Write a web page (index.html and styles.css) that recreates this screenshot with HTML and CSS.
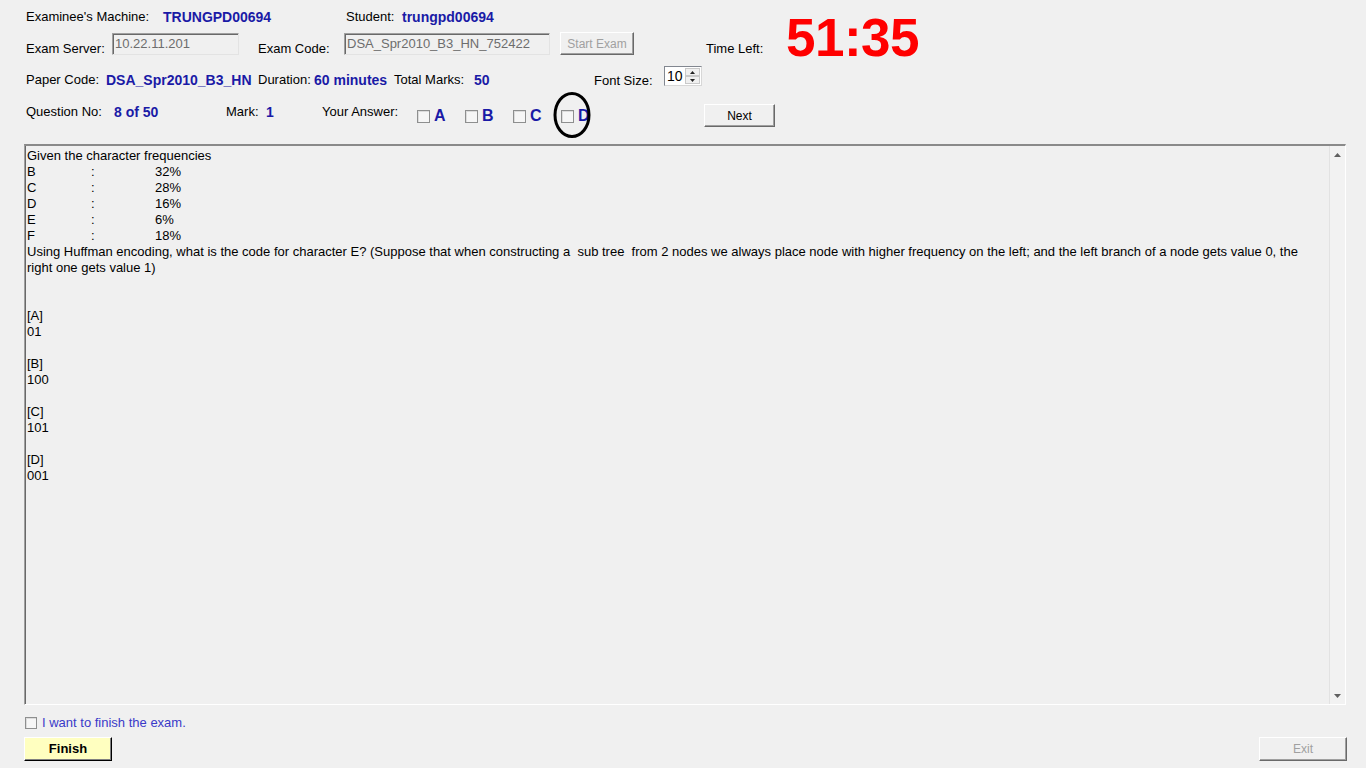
FILE: index.html
```html
<!DOCTYPE html>
<html>
<head>
<meta charset="utf-8">
<link rel="stylesheet" href="styles.css">
</head>
<body>
<div class="app">
  <div class="header">
    <div class="row r1">
      <span class="lbl w137">Examinee's Machine:</span>
      <span class="val w183">TRUNGPD00694</span>
      <span class="lbl w56">Student:</span>
      <span class="val">trungpd00694</span>
    </div>
    <div class="row r2">
      <span class="lbl low w86">Exam Server:</span>
      <span class="input in-server">10.22.11.201</span>
      <span class="lbl low w86">Exam Code:</span>
      <span class="input in-code">DSA_Spr2010_B3_HN_752422</span>
      <span class="btn btn-start disabled">Start Exam</span>
      <span class="lbl low w80">Time Left:</span>
      <span class="timer">51:35</span>
    </div>
    <div class="row r3">
      <span class="lbl w80">Paper Code:</span>
      <span class="val w152">DSA_Spr2010_B3_HN</span>
      <span class="lbl w56">Duration:</span>
      <span class="val w80">60 minutes</span>
      <span class="lbl w80">Total Marks:</span>
      <span class="val w120">50</span>
      <span class="lbl w70 mid">Font Size:</span>
      <span class="spinner">
        <span class="spin-val">10</span>
        <span class="spin-btns">
          <span class="spin-b"><svg width="5" height="3" viewBox="0 0 5 3"><path d="M2.5 0 L5 3 L0 3 Z" fill="#222"/></svg></span>
          <span class="spin-b"><svg width="5" height="3" viewBox="0 0 5 3"><path d="M0 0 L5 0 L2.5 3 Z" fill="#222"/></svg></span>
        </span>
      </span>
    </div>
    <div class="row r4">
      <span class="lbl w88">Question No:</span>
      <span class="val w112">8 of 50</span>
      <span class="lbl w40">Mark:</span>
      <span class="val w56">1</span>
      <span class="lbl w95">Your Answer:</span>
      <span class="opt"><span class="cb"></span><span class="opt-l">A</span></span>
      <span class="opt"><span class="cb"></span><span class="opt-l">B</span></span>
      <span class="opt"><span class="cb"></span><span class="opt-l">C</span></span>
      <span class="opt opt-d"><span class="cb"></span><span class="opt-l">D</span>
        <svg class="ring" width="40" height="48" viewBox="0 0 40 48"><ellipse cx="20" cy="24" rx="17" ry="21.5" fill="none" stroke="#000" stroke-width="3"/></svg>
      </span>
      <span class="btn btn-next">Next</span>
    </div>
  </div>

  <div class="question">
    <div class="q-text">
      <div>Given the character frequencies</div>
      <div class="freq"><span>B</span><span>:</span><span>32%</span></div>
      <div class="freq"><span>C</span><span>:</span><span>28%</span></div>
      <div class="freq"><span>D</span><span>:</span><span>16%</span></div>
      <div class="freq"><span>E</span><span>:</span><span>6%</span></div>
      <div class="freq"><span>F</span><span>:</span><span>18%</span></div>
      <div>Using Huffman encoding, what is the code for character E? (Suppose that when constructing a&nbsp; sub tree&nbsp; from 2 nodes we always place node with higher frequency on the left; and the left branch of a node gets value 0, the<br>right one gets value 1)</div>
      <div class="blank"></div>
      <div class="blank"></div>
      <div>[A]</div>
      <div>01</div>
      <div class="blank"></div>
      <div>[B]</div>
      <div>100</div>
      <div class="blank"></div>
      <div>[C]</div>
      <div>101</div>
      <div class="blank"></div>
      <div>[D]</div>
      <div>001</div>
    </div>
    <div class="scrollbar">
      <svg width="7" height="4" viewBox="0 0 7 4"><path d="M3.5 0 L7 4 L0 4 Z" fill="#606060"/></svg>
      <svg width="7" height="4" viewBox="0 0 7 4"><path d="M0 0 L7 0 L3.5 4 Z" fill="#606060"/></svg>
    </div>
  </div>

  <div class="footer">
    <div class="finish-check"><span class="cb"></span><span class="finish-lbl">I want to finish the exam.</span></div>
    <div class="footer-btns">
      <span class="btn btn-finish">Finish</span>
      <span class="btn btn-exit disabled">Exit</span>
    </div>
  </div>
</div>
</body>
</html>
```

FILE: styles.css
```css
* { box-sizing: border-box; }
html, body {
  margin: 0;
  padding: 0;
  background: #f0f0f0;
}
body {
  font-family: "Liberation Sans", Arial, sans-serif;
  font-size: 13px;
  line-height: 16px;
  color: #000;
  width: 1366px;
  height: 768px;
  overflow: hidden;
}
.app { display: flex; flex-direction: column; }

.header { padding: 9px 0 0 26px; display: flex; flex-direction: column; }
.row { display: flex; align-items: flex-start; white-space: nowrap; }
.r1 { height: 16px; }
.r2 { height: 24px; margin-top: 7px; }
.r3 { height: 22px; margin-top: 10px; }
.r4 { height: 22px; margin-top: 16px; }

.lbl { flex: none; }
.val { flex: none; color: #1a1aa6; font-weight: bold; font-size: 14px; }
.low { align-self: flex-end; }
.r2 .low { margin-bottom: -1px; }
.r3 .lbl, .r3 .val { margin-top: 6px; }
.r3 .mid { margin-top: 7px; }

.w40 { width: 40px; } .w56 { width: 56px; } .w70 { width: 70px; }
.w80 { width: 80px; } .w86 { width: 86px; } .w88 { width: 88px; }
.w95 { width: 95px; } .w112 { width: 112px; } .w120 { width: 120px; }
.w137 { width: 137px; } .w152 { width: 152px; } .w183 { width: 183px; }

.input {
  flex: none;
  height: 22px;
  margin-top: 1px;
  padding: 1px 2px;
  color: #6d6d6d;
  background: #f0f0f0;
  border: 1px solid;
  border-color: #a0a0a0 #e3e3e3 #e3e3e3 #a0a0a0;
  box-shadow: inset 1px 1px 0 #696969;
  line-height: 18px;
}
.in-server { width: 127px; margin-right: 19px; }
.in-code { width: 206px; margin-right: 10px; }

.btn {
  flex: none;
  display: flex;
  align-items: center;
  justify-content: center;
  background: #f0f0f0;
  border: 1px solid;
  border-color: #fff #696969 #696969 #fff;
  box-shadow: inset -1px -1px 0 #a0a0a0;
  font-size: 12px;
}
.disabled { color: #a0a0a0; }
.btn-start { width: 74px; height: 23px; margin-right: 72px; }
.btn-next { width: 71px; height: 23px; margin-left: 95px; }

.timer {
  flex: none;
  color: #ff0000;
  font-weight: bold;
  font-size: 53px;
  line-height: 53px;
  height: 53px;
  margin: -21px 0 -8px 0;
  letter-spacing: -0.5px;
}

.spinner {
  flex: none;
  width: 38px;
  height: 20px;
  display: flex;
  background: #fff;
  border: 1px solid;
  border-color: #828790 #d7d7d7 #d7d7d7 #828790;
  font-size: 14px;
  line-height: 18px;
}
.spin-val { flex: 1; padding-left: 2px; }
.spin-btns { width: 17px; display: flex; flex-direction: column; padding: 1px; }
.spin-b {
  flex: 1;
  display: flex;
  align-items: center;
  justify-content: center;
  background: #f0f0f0;
  border: 1px solid #c9c9c9;
}

.opt { flex: none; width: 48px; display: flex; align-items: center; height: 22px; margin-top: 1px; }
.opt:first-of-type { margin-left: -1px; }
.opt-d { position: relative; }
.cb {
  flex: none;
  width: 13px;
  height: 13px;
  background: #f6f6f6;
  border: 1px solid #8e8f8f;
  box-shadow: inset 1px 1px 0 #dcdcdc;
}
.opt-l { margin-left: 4px; color: #1a1aa6; font-weight: bold; font-size: 16px; line-height: 22px; }
.ring { position: absolute; left: -9px; top: -14px; }

.question {
  margin: 18px 0 0 24px;
  width: 1322px;
  height: 561px;
  display: flex;
  border: 1px solid;
  border-color: #a0a0a0 #fff #fff #a0a0a0;
  border-top: 2px solid #8a8a8a;
  box-shadow: inset 1px 0 0 #696969;
}
.q-text { flex: 1; padding: 2px 0 0 2px; }
.freq { display: grid; grid-template-columns: 64px 64px auto; }
.blank { height: 16px; }
.scrollbar {
  width: 16px;
  flex: none;
  background: #f2f2f2;
  border-left: 1px solid #e2e2e2;
  display: flex;
  flex-direction: column;
  justify-content: space-between;
  align-items: center;
  padding: 7px 0 6px;
}

.footer { padding: 11px 19px 0 25px; display: flex; flex-direction: column; }
.finish-check { display: flex; align-items: center; height: 13px; }
.finish-check .cb { width: 12px; height: 12px; }
.finish-lbl { margin-left: 5px; color: #3a3ac8; }
.footer-btns { display: flex; justify-content: space-between; margin-top: 8px; margin-left: -1px; }
.btn-finish {
  width: 88px;
  height: 24px;
  background: #ffffc0;
  font-weight: bold;
  font-size: 13px;
  border-color: #fff #000 #000 #fff;
  box-shadow: inset -1px -1px 0 #808080;
}
.btn-exit { width: 88px; height: 24px; font-size: 12px; }
```
